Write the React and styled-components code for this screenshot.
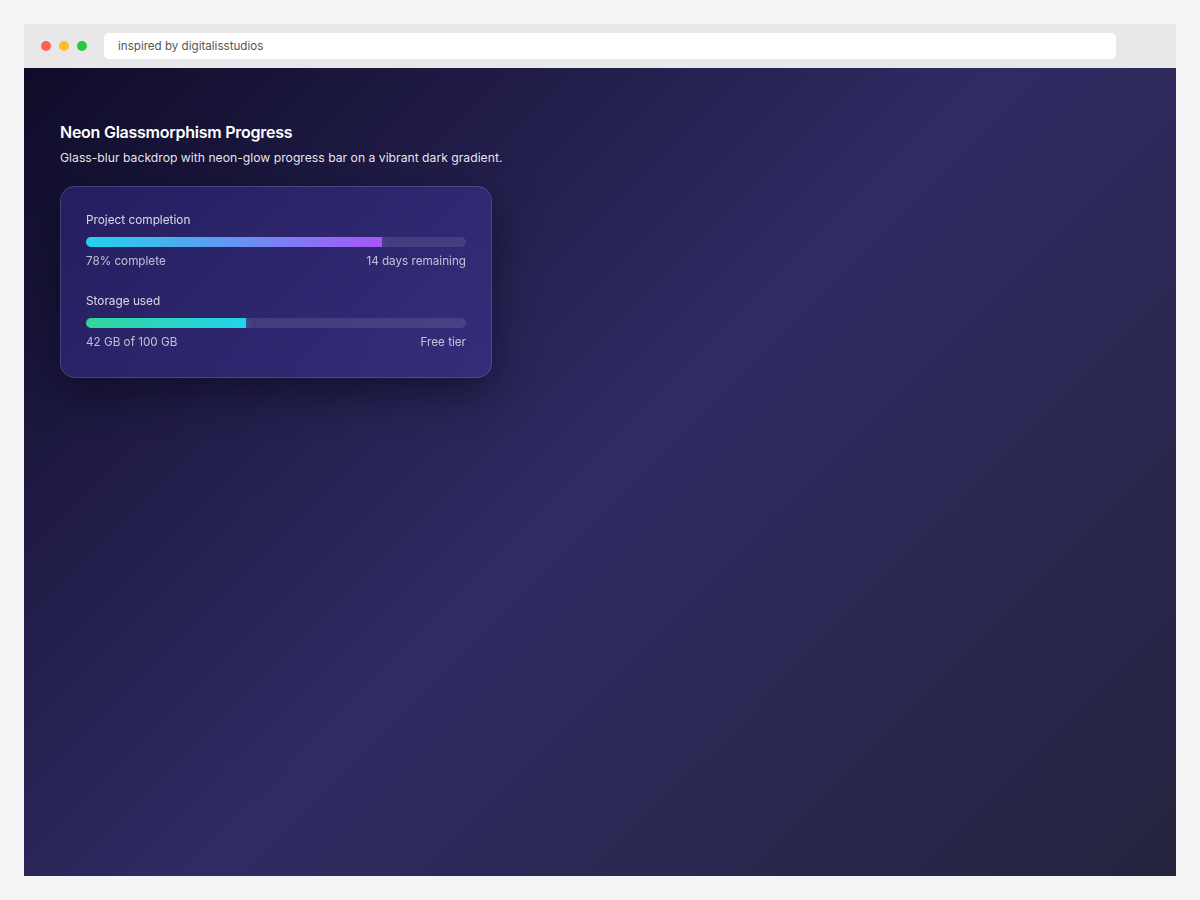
import React from "react";
import styled, { createGlobalStyle } from "styled-components";

const Global = createGlobalStyle`
  html, body { margin: 0; padding: 0; background: #f4f4f6; }
  body { font-family: Inter, "Noto Sans", "Liberation Sans", sans-serif; -webkit-font-smoothing: antialiased; }
  * { box-sizing: border-box; }
`;

const Page = styled.div`
  width: 1200px;
  height: 900px;
  padding: 24px;
  background: #f4f4f6;
`;

const Window = styled.div`
  width: 1152px;
  height: 852px;
  display: flex;
  flex-direction: column;
  overflow: hidden;
`;

const TitleBar = styled.div`
  height: 44px;
  flex: none;
  background: #e8e8e9;
  display: flex;
  align-items: center;
  padding: 0 0 0 17px;
`;

const Dots = styled.div`
  display: flex;
  gap: 8px;
  width: 63px;
`;

const Dot = styled.span`
  width: 10px;
  height: 10px;
  border-radius: 50%;
  background: ${(p) => p.$c};
`;

const Address = styled.div`
  width: 1012px;
  height: 26px;
  background: #ffffff;
  border-radius: 5px;
  display: flex;
  align-items: center;
  padding-left: 14px;
  font-size: 11.6px;
  color: #555;
`;

const Stage = styled.div`
  flex: 1;
  background: linear-gradient(135deg, #0f0c29 0%, #302b63 50%, #24243e 100%);
  padding: 53px 36px 36px;
  color: #fff;
`;

const Title = styled.h1`
  margin: 0;
  font-size: 16px;
  line-height: 22px;
  font-weight: 600;
  letter-spacing: -0.25px;
  color: #fff;
`;

const Subtitle = styled.p`
  margin: 6px 0 0;
  font-size: 12.2px;
  line-height: 18px;
  color: rgba(255, 255, 255, 0.92);
`;

const Card = styled.div`
  margin-top: 19px;
  width: 432px;
  padding: 25px 25px 27px;
  border-radius: 15px;
  background: rgba(90, 74, 240, 0.24);
  border: 1px solid rgba(255, 255, 255, 0.15);
  backdrop-filter: blur(12px);
  box-shadow: 0 14px 40px rgba(5, 3, 20, 0.5);
  display: flex;
  flex-direction: column;
  gap: 24px;
`;

const Item = styled.div`
  display: flex;
  flex-direction: column;
`;

const Label = styled.div`
  font-size: 11.8px;
  line-height: 16px;
  color: rgba(255, 255, 255, 0.82);
`;

const Track = styled.div`
  margin-top: 9px;
  height: 10px;
  border-radius: 999px;
  background: rgba(255, 255, 255, 0.1);
  overflow: hidden;
`;

const Fill = styled.div`
  height: 100%;
  background: linear-gradient(90deg, ${(p) => p.$from}, ${(p) => p.$to});
  box-shadow: 0 0 10px ${(p) => p.$glow};
`;

const Meta = styled.div`
  margin-top: 6px;
  display: flex;
  justify-content: space-between;
  font-size: 11.7px;
  line-height: 16px;
  color: rgba(255, 255, 255, 0.7);
`;

const items = [
  { label: "Project completion", value: 78, from: "#22d3ee", to: "#a855f7", glow: "rgba(168,85,247,0.4)", left: "78% complete", right: "14 days remaining" },
  { label: "Storage used", value: 42, from: "#34d399", to: "#22d3ee", glow: "rgba(34,211,238,0.4)", left: "42 GB of 100 GB", right: "Free tier" },
];

export default function App() {
  return (
    <>
      <Global />
      <Page>
        <Window>
          <TitleBar>
            <Dots>
              <Dot $c="#ff5f57" />
              <Dot $c="#febc2e" />
              <Dot $c="#28c840" />
            </Dots>
            <Address>inspired by digitalisstudios</Address>
          </TitleBar>
          <Stage>
            <Title>Neon Glassmorphism Progress</Title>
            <Subtitle>Glass-blur backdrop with neon-glow progress bar on a vibrant dark gradient.</Subtitle>
            <Card>
              {items.map((it) => (
                <Item key={it.label}>
                  <Label>{it.label}</Label>
                  <Track>
                    <Fill $from={it.from} $to={it.to} $glow={it.glow} style={{ width: `${it.value}%` }} />
                  </Track>
                  <Meta>
                    <span>{it.left}</span>
                    <span>{it.right}</span>
                  </Meta>
                </Item>
              ))}
            </Card>
          </Stage>
        </Window>
      </Page>
    </>
  );
}
